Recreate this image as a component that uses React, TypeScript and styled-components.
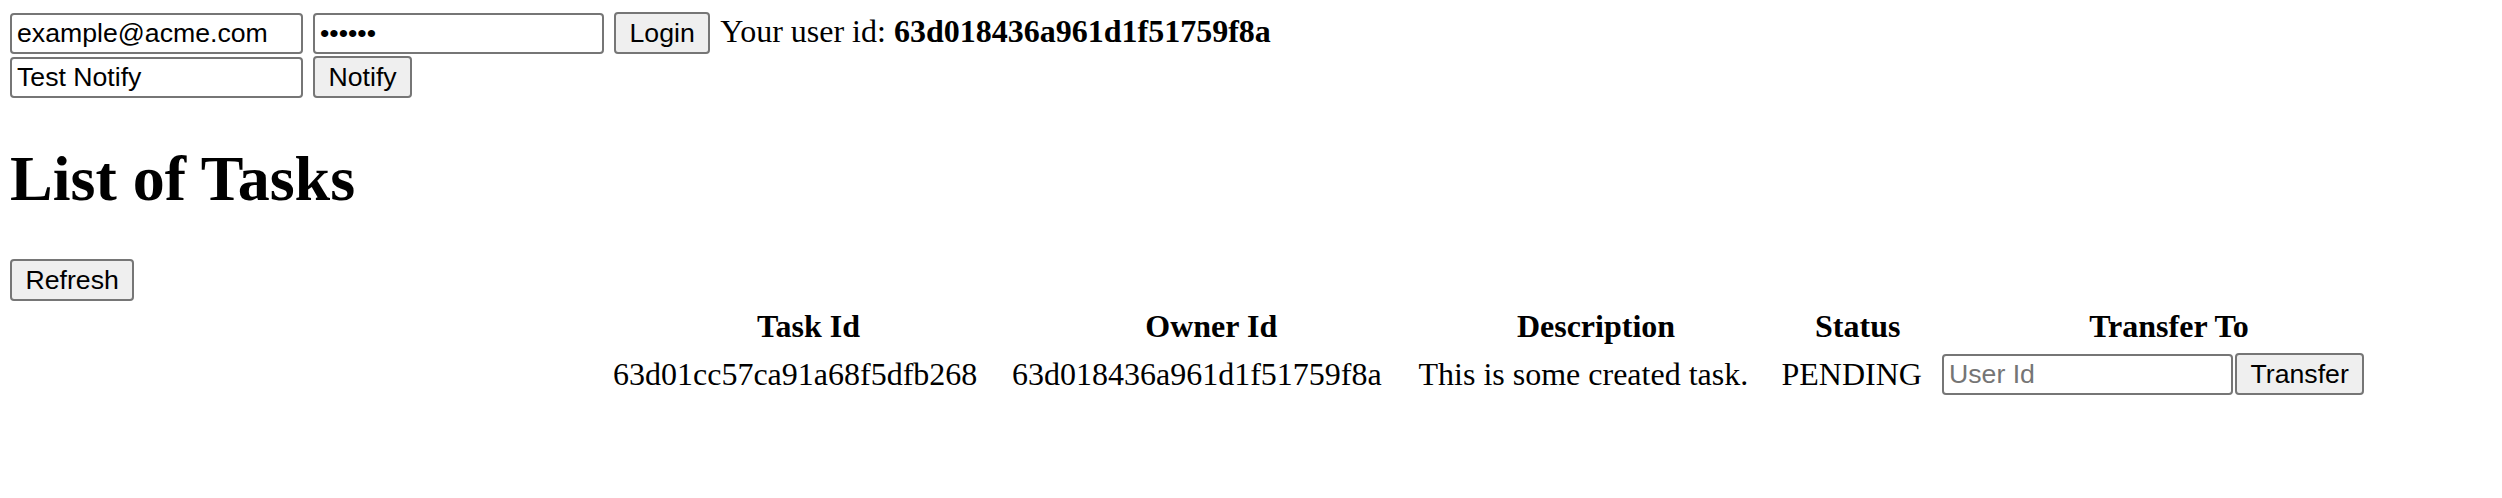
import React from "react";
import styled, { createGlobalStyle } from "styled-components";

const GlobalStyle = createGlobalStyle`
  html, body {
    margin: 0;
    padding: 0;
    background: #ffffff;
  }
  body {
    font-family: "Liberation Serif", "Times New Roman", serif;
    font-size: 32px;
    color: #000000;
  }
`;

const Page = styled.div`
  padding: 12px 0 0 10px;
`;

const FormRow = styled.div<{ $gapTop?: number }>`
  display: flex;
  align-items: baseline;
  gap: 10px;
  margin-top: ${(p) => p.$gapTop ?? 0}px;
`;

const TextInput = styled.input<{ $width?: number }>`
  box-sizing: border-box;
  width: ${(p) => p.$width ?? 293}px;
  height: 41px;
  margin: 0;
  padding: 0 4px 0 5px;
  border: 2px solid #767676;
  border-radius: 4px;
  background: #ffffff;
  color: #000000;
  font-family: "Liberation Sans", Arial, sans-serif;
  font-size: 26.6667px;
  outline: none;

  &::placeholder {
    color: #757575;
  }
`;

const Button = styled.button`
  box-sizing: border-box;
  height: 42px;
  margin: 0;
  padding: 0 13.5px;
  border: 2px solid #767676;
  border-radius: 4px;
  background: #efefef;
  color: #000000;
  font-family: "Liberation Sans", Arial, sans-serif;
  font-size: 26.6667px;
  cursor: pointer;
`;

const UserIdText = styled.span`
  line-height: normal;
  white-space: nowrap;

  b {
    font-weight: 700;
  }
`;

const Title = styled.h1`
  margin: 44px 0 44px;
  font-size: 64px;
  font-weight: 700;
  line-height: 73px;
`;

const Toolbar = styled.div`
  display: flex;
`;

const TaskTable = styled.table`
  margin: 1px 0 0 597px;
  width: 1795px;
  table-layout: fixed;
  border-collapse: separate;
  border-spacing: 4px;
`;

const HeadCell = styled.th<{ $width: number }>`
  width: ${(p) => p.$width}px;
  padding: 2px;
  font-weight: 700;
  text-align: center;
  vertical-align: middle;
  white-space: nowrap;
`;

const Cell = styled.td`
  padding: 2px;
  text-align: left;
  vertical-align: middle;
  white-space: nowrap;
`;

const TransferBox = styled.div`
  display: flex;
  align-items: center;
  gap: 2px;
`;

const columns = [
  { label: "Task Id", width: 391 },
  { label: "Owner Id", width: 398.5 },
  { label: "Description", width: 355 },
  { label: "Status", width: 152.5 },
  { label: "Transfer To", width: 454 },
];

const tasks = [
  {
    id: "63d01cc57ca91a68f5dfb268",
    owner: "63d018436a961d1f51759f8a",
    description: "This is some created task.",
    status: "PENDING",
  },
];

export default function App() {
  return (
    <>
      <GlobalStyle />
      <Page>
        <FormRow>
          <TextInput type="text" defaultValue="example@acme.com" />
          <TextInput type="password" $width={291} defaultValue="secret" />
          <Button>Login</Button>
          <UserIdText>
            Your user id: <b>63d018436a961d1f51759f8a</b>
          </UserIdText>
        </FormRow>
        <FormRow $gapTop={2}>
          <TextInput type="text" defaultValue="Test Notify" />
          <Button>Notify</Button>
        </FormRow>
        <Title>List of Tasks</Title>
        <Toolbar>
          <Button>Refresh</Button>
        </Toolbar>
        <TaskTable>
          <thead>
            <tr>
              {columns.map((c) => (
                <HeadCell key={c.label} $width={c.width}>
                  {c.label}
                </HeadCell>
              ))}
            </tr>
          </thead>
          <tbody>
            {tasks.map((t) => (
              <tr key={t.id}>
                <Cell>{t.id}</Cell>
                <Cell>{t.owner}</Cell>
                <Cell>{t.description}</Cell>
                <Cell>{t.status}</Cell>
                <Cell>
                  <TransferBox>
                    <TextInput type="text" $width={291} placeholder="User Id" />
                    <Button>Transfer</Button>
                  </TransferBox>
                </Cell>
              </tr>
            ))}
          </tbody>
        </TaskTable>
      </Page>
    </>
  );
}
